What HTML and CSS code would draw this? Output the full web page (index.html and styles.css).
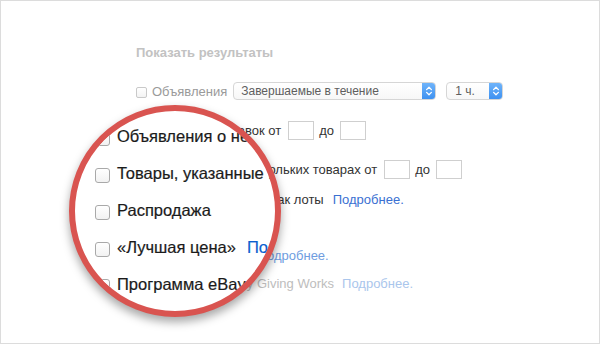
FILE: index.html
```html
<!DOCTYPE html>
<html lang="ru">
<head>
<meta charset="utf-8">
<title>Показать результаты</title>
<link rel="stylesheet" href="styles.css">
</head>
<body>
<div class="frame">
  <div class="form">
    <div class="heading">Показать результаты</div>
    <div class="row r1">
      <span class="cb"></span><span class="lbl muted">Объявления</span>
      <div class="select wide"><span class="sel-text">Завершаемые в течение</span><span class="arrows"><svg width="14" height="18" viewBox="0 0 14 18"><path d="M4.6 7.6 L7 5.2 L9.4 7.6 M4.6 10.4 L7 12.8 L9.4 10.4" fill="none" stroke="#fff" stroke-width="1.3" stroke-linecap="round" stroke-linejoin="round"/></svg></span></div>
      <div class="select narrow"><span class="sel-text">1 ч.</span><span class="arrows"><svg width="14" height="18" viewBox="0 0 14 18"><path d="M4.6 7.6 L7 5.2 L9.4 7.6 M4.6 10.4 L7 12.8 L9.4 10.4" fill="none" stroke="#fff" stroke-width="1.3" stroke-linecap="round" stroke-linejoin="round"/></svg></span></div>
    </div>
    <div class="row inputs">
      <span class="cb"></span><span class="lbl dark">Количество ставок от</span><span class="box"></span><span class="lbl dark to">до</span><span class="box"></span>
    </div>
    <div class="row inputs">
      <span class="cb"></span><span class="lbl dark">Объявления о нескольких товарах от</span><span class="box"></span><span class="lbl dark to">до</span><span class="box"></span>
    </div>
    <div class="row after">
      <span class="cb"></span><span class="lbl dark">Товары, указанные как лоты</span><a class="more">Подробнее.</a>
    </div>
    <div class="row">
      <span class="cb"></span><span class="lbl dark">Распродажа</span>
    </div>
    <div class="row">
      <span class="cb"></span><span class="lbl dark">«Лучшая цена»</span><a class="more soft">Подробнее.</a>
    </div>
    <div class="row">
      <span class="cb"></span><span class="lbl faded">Программа eBay Giving Works</span><a class="more faint">Подробнее.</a>
    </div>
  </div>

  <div class="lens">
    <div class="lens-content">
      <div class="lrow"><span class="lcb"></span><span>Объявления о нескольких товарах от</span></div>
      <div class="lrow"><span class="lcb"></span><span>Товары, указанные как лоты</span></div>
      <div class="lrow"><span class="lcb"></span><span>Распродажа</span></div>
      <div class="lrow"><span class="lcb"></span><span>«Лучшая цена»</span><a class="lmore">Подробнее.</a></div>
      <div class="lrow"><span class="lcb"></span><span>Программа eBay Giving Works</span></div>
    </div>
  </div>
</div>
</body>
</html>
```
FILE: styles.css
```css
html, body {
  margin: 0;
  padding: 0;
  background: #fff;
}

body {
  font-family: "Liberation Sans", Arial, sans-serif;
}

.frame {
  position: relative;
  box-sizing: border-box;
  width: 600px;
  height: 344px;
  border: 1px solid #dcdcdc;
  background: #fff;
  overflow: hidden;
}

.form {
  padding: 44px 0 0 135px;
  font-size: 13px;
}

.heading {
  font-size: 13px;
  font-weight: bold;
  line-height: 15px;
  color: #c2c2c2;
  margin: 0 0 21.5px 0;
}

.row {
  display: flex;
  align-items: center;
  height: 19px;
  margin-top: 9px;
  white-space: nowrap;
}

.row.r1 { margin-top: 0; }
.row.inputs { margin-top: 20px; }
.row.after { margin-top: 11px; }

.cb {
  box-sizing: border-box;
  width: 11px;
  height: 11px;
  border: 1px solid #c9c9c9;
  border-radius: 2px;
  background: linear-gradient(#fff, #f3f3f3);
  margin-right: 5px;
  flex: none;
}

.row.r1 .cb { margin-top: 3px; }

.lbl { line-height: 19px; }
.lbl.muted { color: #9a9a9a; }
.lbl.dark { color: #333; }
.lbl.faded { color: #bdbdbd; }
.lbl.to { margin: 0 -1px 0 5px; }

.select {
  box-sizing: border-box;
  display: flex;
  align-items: stretch;
  height: 18px;
  border: 1px solid #d6d6d6;
  border-radius: 4px;
  background: linear-gradient(#fff, #f7f7f7);
  margin-left: 6px;
  overflow: hidden;
}

.select.wide { width: 203px; }
.select.narrow { width: 57px; margin-left: 10px; }

.sel-text {
  flex: 1;
  font-size: 12px;
  line-height: 16px;
  color: #5e5e5e;
  padding-left: 7px;
}

.select.narrow .sel-text { padding-left: 8px; }

.arrows {
  width: 14px;
  margin: -1px -1px -1px 0;
  background: linear-gradient(#72b6fb, #3b8ff0);
  display: flex;
  align-items: center;
  justify-content: center;
}

.arrows svg { display: block; }

.box {
  box-sizing: border-box;
  width: 26px;
  height: 19px;
  border: 1px solid #cfcfcf;
  background: #fff;
  margin-left: 7px;
  flex: none;
}

.more {
  margin-left: 9px;
  color: #3a70d2;
}

.more.soft { margin-left: 12px; color: #6f9ddf; }
.more.faint { margin-left: 8px; color: #aac6ec; }

/* magnifier */
.lens {
  position: absolute;
  left: 68px;
  top: 104px;
  width: 212px;
  height: 212px;
  box-sizing: border-box;
  border: 6px solid #d95450;
  border-radius: 50%;
  background: #fff;
  overflow: hidden;
  box-shadow: 0 5px 10px rgba(0, 0, 0, 0.35);
}

.lens-content {
  padding: 15px 0 0 20px;
  display: flex;
  flex-direction: column;
  gap: 17px;
  font-size: 16.5px;
  color: #1b1b1b;
  -webkit-text-stroke: 0.2px #1b1b1b;
}

.lrow {
  display: flex;
  align-items: flex-start;
  height: 20px;
  line-height: 20px;
  white-space: nowrap;
}

.lcb {
  box-sizing: border-box;
  width: 15px;
  height: 15px;
  margin-top: 5px;
  margin-right: 7px;
  border: 1.5px solid #a9a9a9;
  border-radius: 3px;
  background: linear-gradient(#fff, #f2f2f2);
  flex: none;
}

.lmore {
  margin-left: 11px;
  color: #0b5fcf;
  -webkit-text-stroke: 0.2px #0b5fcf;
}
```
